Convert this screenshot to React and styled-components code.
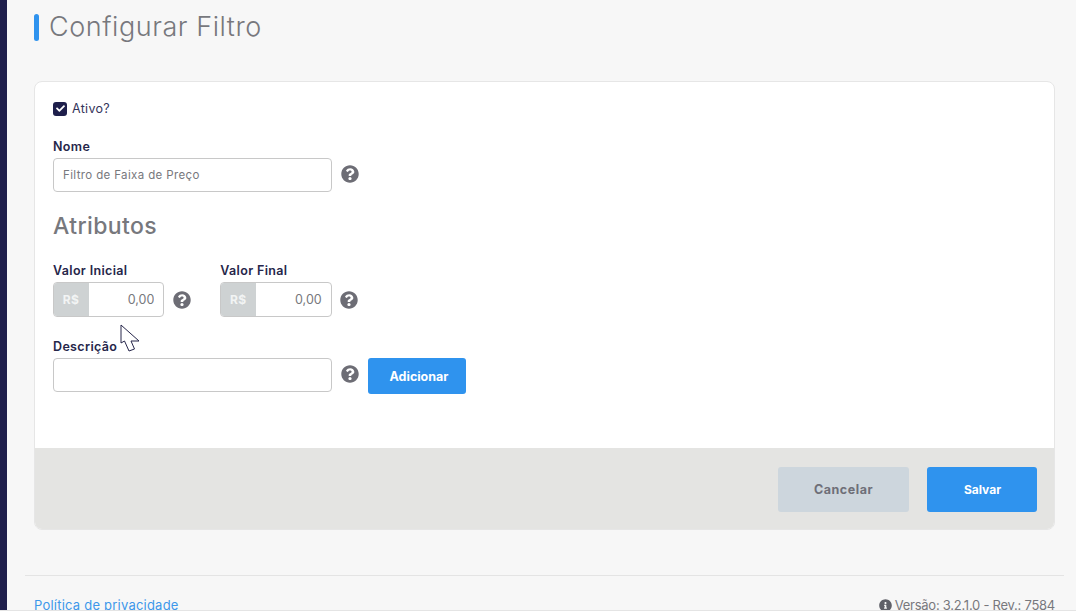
import React from 'react';
import styled, { createGlobalStyle } from 'styled-components';
import { FaQuestionCircle, FaInfoCircle, FaCheck } from 'react-icons/fa';

const GlobalStyle = createGlobalStyle`
  html, body {
    margin: 0;
    height: 611px;
    overflow: hidden;
    background: #f7f7f7;
  }
  * {
    box-sizing: border-box;
  }
  body {
    font-family: "Inter", "Liberation Sans", sans-serif;
  }
`;

function HelpButton() {
  return (
    <HelpIcon>
      <FaQuestionCircle size={18} />
    </HelpIcon>
  );
}

function MoneyField({ label }) {
  return (
    <FieldGroup>
      <Label>{label}</Label>
      <FieldRow>
        <MoneyBox>
          <MoneyPrefix>R$</MoneyPrefix>
          <MoneyInput readOnly value="0,00" />
        </MoneyBox>
        <HelpButton />
      </FieldRow>
    </FieldGroup>
  );
}

function Cursor() {
  return (
    <CursorIcon width="20" height="30" viewBox="0 0 20 30">
      <path
        d="M1 1 L1 19 L4.5 17 L9 27 L14.5 25 L11 17 L19 17 Z"
        fill="#fff"
        stroke="#26264a"
        strokeWidth="1"
      />
    </CursorIcon>
  );
}

export default function App() {
  return (
    <Page>
      <GlobalStyle />
      <Sidebar />
      <Main>
        <TitleBar>
          <TitleAccent />
          <Title>Configurar Filtro</Title>
        </TitleBar>

        <Card>
          <CardBody>
            <CheckRow>
              <CheckBox>
                <FaCheck size={9} />
              </CheckBox>
              <CheckLabel>Ativo?</CheckLabel>
            </CheckRow>

            <FieldGroup>
              <Label>Nome</Label>
              <FieldRow>
                <TextInput readOnly value="Filtro de Faixa de Preço" />
                <HelpButton />
              </FieldRow>
            </FieldGroup>

            <SectionTitle>Atributos</SectionTitle>

            <MoneyRow>
              <MoneyField label="Valor Inicial" />
              <MoneyField label="Valor Final" />
            </MoneyRow>

            <DescriptionGroup>
              <Label>Descrição</Label>
              <Cursor />
              <FieldRow>
                <TextInput readOnly value="" />
                <HelpButton />
                <AddButton>Adicionar</AddButton>
              </FieldRow>
            </DescriptionGroup>
          </CardBody>

          <CardFooter>
            <CancelButton>Cancelar</CancelButton>
            <SaveButton>Salvar</SaveButton>
          </CardFooter>
        </Card>

        <PageFooter>
          <PrivacyLink href="#">Política de privacidade</PrivacyLink>
          <Version>
            <FaInfoCircle size={13} />
            Versão: 3.2.1.0 - Rev.: 7584
          </Version>
        </PageFooter>
      </Main>
    </Page>
  );
}

const Page = styled.div`
  display: flex;
  width: 1076px;
  height: 611px;
  overflow: hidden;
  border-bottom: 1px solid #e4e4e4;
`;

const Sidebar = styled.div`
  flex: 0 0 7px;
  background: #1e1f4b;
`;

const Main = styled.div`
  flex: 1;
  display: flex;
  flex-direction: column;
  padding: 14px 21px 0 27px;
`;

const TitleBar = styled.div`
  flex: none;
  display: flex;
  align-items: center;
  gap: 10px;
  height: 27px;
`;

const TitleAccent = styled.div`
  width: 5px;
  height: 27px;
  border-radius: 3px;
  background: #2f93ee;
`;

const Title = styled.h1`
  margin: -2px 0 0;
  font-size: 27px;
  font-weight: 300;
  line-height: 27px;
  letter-spacing: 0.55px;
  color: #77787d;
`;

const Card = styled.div`
  flex: none;
  margin-top: 40px;
  height: 449px;
  display: flex;
  flex-direction: column;
  background: #fff;
  border: 1px solid #e6e6e6;
  border-radius: 8px;
  overflow: hidden;
`;

const CardBody = styled.div`
  flex: 1;
  display: flex;
  flex-direction: column;
  padding: 18px 18px 0;
`;

const CheckRow = styled.div`
  display: flex;
  align-items: center;
  gap: 5px;
  height: 17px;
  margin-bottom: 22px;
`;

const CheckBox = styled.span`
  width: 14px;
  height: 14px;
  display: flex;
  align-items: center;
  justify-content: center;
  border-radius: 3px;
  background: #1e1f4b;
  color: #fff;
`;

const CheckLabel = styled.span`
  font-size: 12.5px;
  letter-spacing: 0.3px;
  color: #33345a;
`;

const FieldGroup = styled.div`
  display: flex;
  flex-direction: column;
`;

const DescriptionGroup = styled(FieldGroup)`
  position: relative;
  margin-top: 22px;
`;

const Label = styled.label`
  font-size: 12.5px;
  font-weight: 600;
  line-height: 14px;
  height: 14px;
  margin: 1px 0 4px;
  letter-spacing: 0.35px;
  color: #26264a;
`;

const FieldRow = styled.div`
  display: flex;
  align-items: center;
  gap: 8.5px;
`;

const TextInput = styled.input`
  width: 279px;
  height: 34px;
  padding: 0 9px;
  border: 1px solid #c8c8c8;
  border-radius: 4px;
  outline: none;
  font-family: inherit;
  font-size: 11.5px;
  letter-spacing: 0.37px;
  color: #77787d;
  background: #fff;
`;

const HelpIcon = styled.span`
  display: flex;
  width: 18px;
  height: 18px;
  margin-bottom: 2px;
  color: #6d6d75;
`;

const SectionTitle = styled.h2`
  margin: 19px 0 22px;
  height: 30px;
  font-size: 23px;
  font-weight: 500;
  line-height: 30px;
  letter-spacing: 0.4px;
  color: #77787d;
`;

const MoneyRow = styled.div`
  display: flex;
  gap: 29.4px;

  ${HelpIcon} {
    margin-bottom: 0;
  }
`;

const MoneyBox = styled.div`
  display: flex;
  width: 111.4px;
  height: 35px;
  border: 1px solid #c8c8c8;
  border-radius: 4px;
  overflow: hidden;
  background: #fff;
`;

const MoneyPrefix = styled.span`
  flex: 0 0 36px;
  margin: -1px 0 -1px -1px;
  display: flex;
  align-items: center;
  justify-content: center;
  font-size: 12px;
  font-weight: 700;
  letter-spacing: 0.5px;
  color: #f2f4f4;
  background: #ced2d3;
`;

const MoneyInput = styled.input`
  flex: 1;
  min-width: 0;
  border: none;
  outline: none;
  padding: 0 9px 0 0;
  text-align: right;
  font-family: inherit;
  font-size: 12.5px;
  color: #77787d;
  background: transparent;
`;

const CursorIcon = styled.svg`
  position: absolute;
  left: 67px;
  top: -15px;
`;

const BaseButton = styled.button`
  border: none;
  border-radius: 3px;
  font-family: "Inter", "Liberation Sans", sans-serif;
  font-size: 12.5px;
  font-weight: 700;
`;

const AddButton = styled(BaseButton)`
  flex: none;
  width: 98px;
  height: 36px;
  margin: 0 0 -2px 1px;
  padding: 0 0 0 4px;
  align-self: flex-start;
  color: #fff;
  background: #2f93ee;
`;

const CardFooter = styled.div`
  flex: none;
  height: 81px;
  display: flex;
  justify-content: flex-end;
  gap: 18px;
  padding: 19px 17px 0 0;
  background: #e4e4e2;
`;

const CancelButton = styled(BaseButton)`
  width: 131px;
  height: 45px;
  letter-spacing: 0.55px;
  color: #6e6f78;
  background: #cdd6dd;
`;

const SaveButton = styled(BaseButton)`
  width: 110px;
  height: 45px;
  padding-left: 7px;
  font-size: 12px;
  color: #fff;
  background: #2f93ee;
`;

const PageFooter = styled.div`
  flex: none;
  display: flex;
  justify-content: space-between;
  margin: 45px -9px 0 -9px;
  padding: 20px 9px 0;
  border-top: 1px solid #e4e4e4;
  font-size: 13px;
  line-height: 18px;
`;

const PrivacyLink = styled.a`
  letter-spacing: 0.22px;
  color: #3d97ea;
  text-decoration: none;
`;

const Version = styled.span`
  display: flex;
  align-items: center;
  gap: 3px;
  letter-spacing: -0.25px;
  color: #77787d;

  svg {
    color: #5f6068;
  }
`;
